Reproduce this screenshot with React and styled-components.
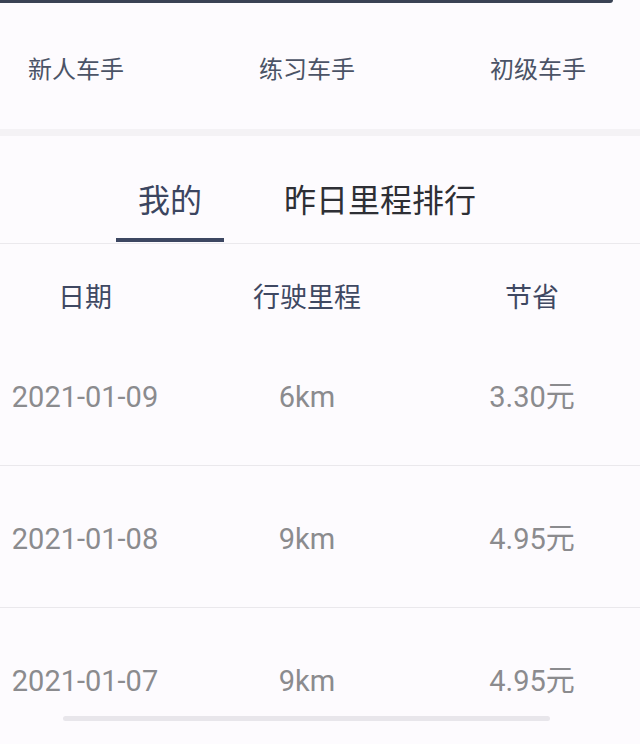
import React from 'react'
import styled, {createGlobalStyle} from 'styled-components'

const Global = createGlobalStyle`
    html, body {
        margin: 0;
        padding: 0;
        background: #fdfbfe;
    }
    body {
        font-family: Roboto, "Noto Sans CJK SC", sans-serif;
    }
`
const Page = styled.div`
    position: relative;
    width: 640px;
    height: 744px;
    overflow: hidden;
    background: #fdfbfe;
`
const TopCard = styled.div`
    width: 613px;
    height: 3px;
    background: #3a4254;
    border-bottom-right-radius: 3px;
`
const Levels = styled.div`
    display: flex;
    justify-content: space-between;
    align-items: center;
    height: 126px;
    padding: 8px 54px 0 28px;
    box-sizing: border-box;
`
const Level = styled.div`
    font-size: 24px;
    line-height: 32px;
    color: #4b5366;
`
const Band = styled.div`
    height: 7px;
    background: #f4f2f5;
`
const Tabs = styled.div`
    display: flex;
    gap: 38px;
    padding-left: 116px;
    border-bottom: 1px solid #ebe9ed;
`
const Tab = styled.div`
    display: flex;
    flex-direction: column;
    align-items: center;
    padding: 45px 22px 0;
    font-size: 32px;
    line-height: 40px;
    color: ${p => p.active ? '#3b4560' : '#2e2f35'};
    &::after {
        content: '';
        align-self: stretch;
        height: 4px;
        margin: 17px -22px 1px;
        background: ${p => p.active ? '#3d4762' : 'transparent'};
    }
`
const Row = styled.div`
    display: grid;
    grid-template-columns: 170px 274px 176px;
    align-items: center;
    box-sizing: border-box;
`
const HeadRow = styled(Row)`
    height: 80px;
    padding: 38px 0 10px;
`
const DataRow = styled(Row)`
    height: 142px;
    padding-top: 5px;
    border-bottom: 1px solid #eae8ec;
`
const Cell = styled.div`
    text-align: center;
    font-size: ${p => p.head ? '27px' : '29px'};
    line-height: 32px;
    color: ${p => p.head ? '#3f4862' : '#8b8b8e'};
`
const Scrollbar = styled.div`
    position: absolute;
    left: 63px;
    top: 716px;
    width: 487px;
    height: 5px;
    border-radius: 3px;
    background: #e8e6eb;
`

const rows = [
    {date: '2021-01-09', dist: '6km', save: '3.30元'},
    {date: '2021-01-08', dist: '9km', save: '4.95元'},
    {date: '2021-01-07', dist: '9km', save: '4.95元'},
]

const App = () => {
    return (
        <Page>
            <Global/>
            <TopCard/>
            <Levels>
                <Level>新人车手</Level>
                <Level>练习车手</Level>
                <Level>初级车手</Level>
            </Levels>
            <Band/>
            <Tabs>
                <Tab active>我的</Tab>
                <Tab>昨日里程排行</Tab>
            </Tabs>
            <HeadRow>
                <Cell head>日期</Cell>
                <Cell head>行驶里程</Cell>
                <Cell head>节省</Cell>
            </HeadRow>
            {rows.map(r => (
                <DataRow key={r.date}>
                    <Cell>{r.date}</Cell>
                    <Cell>{r.dist}</Cell>
                    <Cell>{r.save}</Cell>
                </DataRow>
            ))}
            <Scrollbar/>
        </Page>
    )
}

export default App
